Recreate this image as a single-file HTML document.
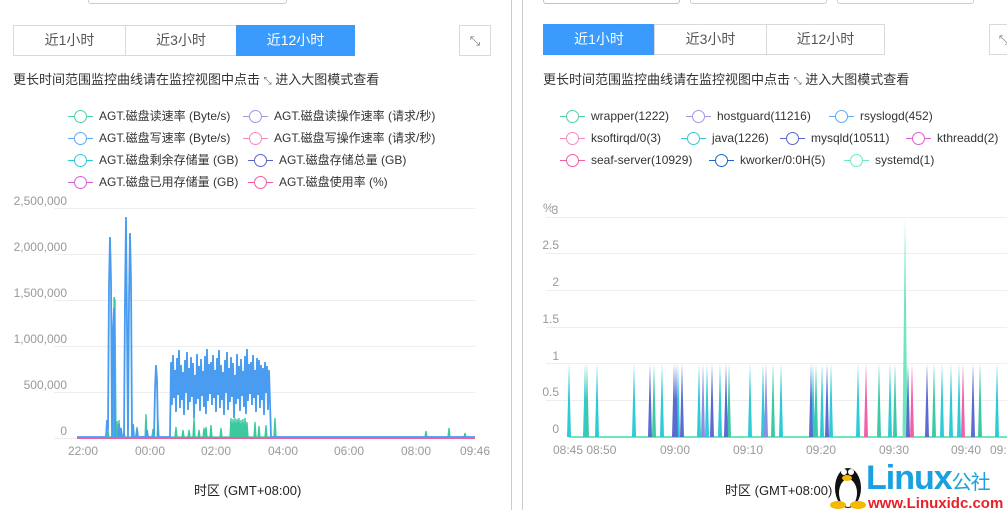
<!DOCTYPE html>
<html><head><meta charset="utf-8"><style>
*{margin:0;padding:0;box-sizing:border-box}
body{width:1007px;height:510px;overflow:hidden;background:#fff;font-family:"Liberation Sans","Noto Sans CJK SC",sans-serif;color:#333;position:relative}
.a{position:absolute;white-space:nowrap}
.btn{position:absolute;height:31px;border:1px solid #d9d9d9;background:#fff;font-size:14px;color:#555;text-align:center;line-height:29px}
.on{background:#3a9bfc;border-color:#3a9bfc;color:#fff}
.lg{position:absolute;font-size:12px;color:#333;line-height:14px;white-space:nowrap}
.lg i{display:inline-block;width:25px;height:12px;vertical-align:-2px;margin-right:6px;position:relative}
.lg i:before{content:"";position:absolute;left:0;right:0;top:6px;border-top:1px solid currentColor}
.lg i:after{content:"";position:absolute;left:6px;top:0;width:11px;height:11px;border-radius:50%;border:1.5px solid currentColor;background:#fff}
.ax{position:absolute;font-size:12px;color:#999;white-space:nowrap}
</style></head><body>
<div class="a" style="left:88px;top:-10px;width:199px;height:14px;border:1px solid #ccc;border-radius:3px"></div>
<div class="a" style="left:543px;top:-10px;width:137px;height:14px;border:1px solid #9cc9f5;border-radius:3px"></div>
<div class="a" style="left:690px;top:-10px;width:137px;height:14px;border:1px solid #ccc;border-radius:3px"></div>
<div class="a" style="left:837px;top:-10px;width:137px;height:14px;border:1px solid #ccc;border-radius:3px"></div>
<div class="a" style="left:511px;top:0;width:1px;height:510px;background:#ccc"></div>
<div class="a" style="left:522px;top:0;width:1px;height:510px;background:#ccc"></div>

<div class="btn" style="left:13px;top:25px;width:113px">近1小时</div>
<div class="btn" style="left:125px;top:25px;width:112px">近3小时</div>
<div class="btn on" style="left:236px;top:25px;width:119px">近12小时</div>
<div class="btn" style="left:459px;top:25px;width:32px;font-size:13px;color:#777">⤡</div>
<div class="a" style="left:13px;top:69px;font-size:13px">更长时间范围监控曲线请在监控视图中点击 <span style="font-size:10px;color:#666">⤡</span> 进入大图模式查看</div>

<div class="btn on" style="left:543px;top:24px;width:112px">近1小时</div>
<div class="btn" style="left:654px;top:24px;width:113px">近3小时</div>
<div class="btn" style="left:766px;top:24px;width:119px">近12小时</div>
<div class="btn" style="left:989px;top:24px;width:30px;font-size:13px;color:#777">⤡</div>
<div class="a" style="left:543px;top:69px;font-size:13px">更长时间范围监控曲线请在监控视图中点击 <span style="font-size:10px;color:#666">⤡</span> 进入大图模式查看</div>

<div class="lg" style="left:68px;top:109px"><i style="color:#4fd1a5"></i>AGT.磁盘读速率 (Byte/s)</div>
<div class="lg" style="left:243px;top:109px"><i style="color:#9f9ae6"></i>AGT.磁盘读操作速率 (请求/秒)</div>
<div class="lg" style="left:68px;top:131px"><i style="color:#5fa8f5"></i>AGT.磁盘写速率 (Byte/s)</div>
<div class="lg" style="left:243px;top:131px"><i style="color:#f58ac0"></i>AGT.磁盘写操作速率 (请求/秒)</div>
<div class="lg" style="left:68px;top:153px"><i style="color:#2ecad6"></i>AGT.磁盘剩余存储量 (GB)</div>
<div class="lg" style="left:248px;top:153px"><i style="color:#5565c8"></i>AGT.磁盘存储总量 (GB)</div>
<div class="lg" style="left:68px;top:175px"><i style="color:#d860d0"></i>AGT.磁盘已用存储量 (GB)</div>
<div class="lg" style="left:248px;top:175px"><i style="color:#f05ea0"></i>AGT.磁盘使用率 (%)</div>

<div class="lg" style="left:560px;top:109px"><i style="color:#4fd1a5"></i>wrapper(1222)</div>
<div class="lg" style="left:686px;top:109px"><i style="color:#9f9ae6"></i>hostguard(11216)</div>
<div class="lg" style="left:829px;top:109px"><i style="color:#5fa8f5"></i>rsyslogd(452)</div>
<div class="lg" style="left:560px;top:131px"><i style="color:#f58ac0"></i>ksoftirqd/0(3)</div>
<div class="lg" style="left:681px;top:131px"><i style="color:#2ecad6"></i>java(1226)</div>
<div class="lg" style="left:780px;top:131px"><i style="color:#5565c8"></i>mysqld(10511)</div>
<div class="lg" style="left:906px;top:131px"><i style="color:#d860d0"></i>kthreadd(2)</div>
<div class="lg" style="left:560px;top:153px"><i style="color:#f05ea0"></i>seaf-server(10929)</div>
<div class="lg" style="left:709px;top:153px"><i style="color:#1a66c8"></i>kworker/0:0H(5)</div>
<div class="lg" style="left:844px;top:153px"><i style="color:#6ee6c0"></i>systemd(1)</div>

<div class="ax" style="right:940px;top:194px">2,500,000</div>
<div class="ax" style="right:940px;top:240px">2,000,000</div>
<div class="ax" style="right:940px;top:286px">1,500,000</div>
<div class="ax" style="right:940px;top:332px">1,000,000</div>
<div class="ax" style="right:940px;top:378px">500,000</div>
<div class="ax" style="right:940px;top:424px">0</div>
<div class="ax" style="left:68px;top:444px">22:00</div>
<div class="ax" style="left:135px;top:444px">00:00</div>
<div class="ax" style="left:201px;top:444px">02:00</div>
<div class="ax" style="left:268px;top:444px">04:00</div>
<div class="ax" style="left:334px;top:444px">06:00</div>
<div class="ax" style="left:401px;top:444px">08:00</div>
<div class="ax" style="left:460px;top:444px">09:46</div>
<div class="a" style="left:194px;top:480px;font-size:13px;color:#222">时区 (GMT+08:00)</div>

<div class="ax" style="left:543px;top:201px">%<span style="position:relative;left:-2px;top:2px">3</span></div>
<div class="ax" style="right:448px;top:238px">2.5</div>
<div class="ax" style="right:448px;top:275px">2</div>
<div class="ax" style="right:448px;top:312px">1.5</div>
<div class="ax" style="right:448px;top:349px">1</div>
<div class="ax" style="right:448px;top:385px">0.5</div>
<div class="ax" style="right:448px;top:422px">0</div>
<div class="ax" style="left:553px;top:443px">08:45 08:50</div>
<div class="ax" style="left:660px;top:443px">09:00</div>
<div class="ax" style="left:733px;top:443px">09:10</div>
<div class="ax" style="left:806px;top:443px">09:20</div>
<div class="ax" style="left:879px;top:443px">09:30</div>
<div class="ax" style="left:951px;top:443px">09:40</div>
<div class="ax" style="left:990px;top:443px">09:50</div>
<div class="a" style="left:725px;top:480px;font-size:13px;color:#222">时区 (GMT+08:00)</div>

<svg class="a" style="left:0;top:0" width="1007" height="510">
<g stroke="#eee" stroke-width="1">
<line x1="54" y1="208.5" x2="475" y2="208.5"/><line x1="54" y1="254.5" x2="475" y2="254.5"/><line x1="54" y1="300.5" x2="475" y2="300.5"/><line x1="54" y1="346.5" x2="475" y2="346.5"/><line x1="54" y1="392.5" x2="475" y2="392.5"/><line x1="54" y1="438.5" x2="475" y2="438.5"/>
<line x1="546" y1="217.5" x2="1007" y2="217.5"/><line x1="546" y1="253.5" x2="1007" y2="253.5"/><line x1="546" y1="290.5" x2="1007" y2="290.5"/><line x1="546" y1="327.5" x2="1007" y2="327.5"/><line x1="546" y1="363.5" x2="1007" y2="363.5"/><line x1="546" y1="400.5" x2="1007" y2="400.5"/>
</g>
<polyline fill="#3cc9a0" stroke="#3cc9a0" stroke-width="1.3" points="105,437 107,437 108,430 109,437 113,437 114,297 115,300 116,437 117,421 118,437 119,420 120,437 123,437 124,432 125,437 136,437 137,427 138,437 145,437 146,414 147,437 152,437 153,429 154,437 157,437 158,420 159,437 175,437 176,427 177,437 182,437 183,430 184,437 188,437 189,430 190,437 193,437 194,418 195,437 198,437 199,430 200,437 203,437 204,428 205,436 206,427 207,437 210,437 211,425 212,437 220,437 221,428 222,437 230,437 231,418 232,434 233,419 234,432 235,418 236,436 237,419 238,430 239,418 240,435 241,420 242,432 243,419 244,437 245,418 246,432 247,422 248,437 254,437 255,422 256,437 258,437 259,426 260,437 265,437 266,425 267,437 274,437 275,418 276,437 425,437 426,431 427,437 448,437 449,428 450,437 464,437 465,433 466,437"/>
<polyline fill="none" stroke="#4a9cf0" stroke-width="1.8" points="77,437 106,437 107,420 108,430 109,286 110,237 111,280 112,437 113,330 114,308 115,437 118,437 119,424 120,437 121,428 122,437 124,437 125,300 126,217 127,330 128,437 129,300 130,233 131,280 132,437 133,424 134,437 136,437 137,429 138,437 146,437 147,430 148,437 154,437 155,390 156,365 157,380 158,437 170,437 171,362 172,405 173,355 174,398 175,370 176,412 177,358 178,395 179,350 180,408 181,365 182,400 183,372 184,415 185,360 186,393 187,352 188,410 189,368 190,402 191,357 192,397 193,363 194,418 195,375 196,404 197,354 198,399 199,366 200,411 201,359 202,396 203,371 204,407 205,356 206,414 207,349 208,401 209,364 210,394 211,362 212,405 213,355 214,398 215,370 216,412 217,358 218,395 219,350 220,408 221,365 222,400 223,372 224,415 225,360 226,393 227,352 228,410 229,368 230,402 231,357 232,397 233,363 234,418 235,375 236,404 237,354 238,399 239,366 240,411 241,359 242,396 243,371 244,407 245,356 246,414 247,349 248,401 249,364 250,394 251,362 252,405 253,355 254,398 255,370 256,412 257,358 258,395 259,360 260,408 261,365 262,400 263,368 264,415 265,362 266,393 267,366 268,410 269,370 270,402 271,437 475,437"/>
<line x1="77" y1="438" x2="475" y2="438" stroke="#f05ea0" stroke-width="2"/>
<line x1="569" y1="437" x2="1007" y2="437" stroke="#6ee6c0" stroke-width="2"/>
<polygon points="902.5,437 905,217 907.5,437" fill="#6ee6c0"/>
<g fill="#2ecad6">
<polygon points="567,437 569,363 571,437"/><polygon points="583,437 585,363 587,437"/><polygon points="595,437 597,363 599,437"/><polygon points="632,437 634,363 636,437"/><polygon points="660,437 662,363 664,437"/><polygon points="676,437 678,363 680,437"/><polygon points="697,437 699,363 701,437"/><polygon points="705,437 707,363 709,437"/><polygon points="718,437 720,363 722,437"/><polygon points="748,437 750,363 752,437"/><polygon points="761,437 763,363 765,437"/><polygon points="779,437 781,363 783,437"/><polygon points="811,437 813,363 815,437"/><polygon points="820,437 822,363 824,437"/><polygon points="829,437 831,363 833,437"/><polygon points="856,437 858,363 860,437"/><polygon points="888,437 890,363 892,437"/><polygon points="940,437 942,363 944,437"/><polygon points="949,437 951,363 953,437"/><polygon points="957,437 959,363 961,437"/><polygon points="995,437 997,363 999,437"/>
</g>
<g fill="#3ec9a5">
<polygon points="585,437 587,363 589,437"/><polygon points="652,437 654,363 656,437"/><polygon points="727,437 729,363 731,437"/><polygon points="771,437 773,363 775,437"/><polygon points="814,437 816,363 818,437"/><polygon points="877,437 879,363 881,437"/><polygon points="893,437 895,363 897,437"/><polygon points="932,437 934,363 936,437"/><polygon points="978,437 980,363 982,437"/>
</g>
<g fill="#5b6bd0">
<polygon points="648,437 650,363 652,437"/><polygon points="672,437 674,363 676,437"/><polygon points="674,437 676,363 678,437"/><polygon points="680,437 682,363 684,437"/><polygon points="710,437 712,363 714,437"/><polygon points="724,437 726,363 728,437"/><polygon points="809,437 811,363 813,437"/><polygon points="825,437 827,363 829,437"/><polygon points="906,437 908,363 910,437"/><polygon points="925,437 927,363 929,437"/><polygon points="971,437 973,363 975,437"/>
</g>
<g fill="#f062a8">
<polygon points="864,437 866,363 868,437"/><polygon points="910,437 912,363 914,437"/><polygon points="961,437 963,363 965,437"/>
</g>
<g fill="#8f8de0">
<polygon points="701,437 703,363 705,437"/><polygon points="764,437 766,363 768,437"/>
</g>
<g transform="translate(830,462)">
<ellipse cx="18" cy="26" rx="13" ry="20" fill="#111"/>
<ellipse cx="18" cy="31" rx="9" ry="14" fill="#fff"/>
<circle cx="14" cy="10" r="3" fill="#fff"/><circle cx="21" cy="10" r="3" fill="#fff"/>
<ellipse cx="17" cy="16" rx="5" ry="3" fill="#f5b800"/>
<ellipse cx="8" cy="43" rx="8" ry="4" fill="#f5b800"/>
<ellipse cx="28" cy="43" rx="8" ry="4" fill="#f5b800"/>
</g>
</svg>
<div class="a" style="left:866px;top:458px;font-size:34px;font-weight:bold;color:#1aa0e0;letter-spacing:-1px;line-height:40px">Linux<span style="font-size:20px;font-weight:normal">公社</span></div>
<div class="a" style="left:868px;top:496px;font-size:15px;font-weight:bold;color:#e8202a;line-height:16px">www.Linuxidc.com</div>
</body></html>
